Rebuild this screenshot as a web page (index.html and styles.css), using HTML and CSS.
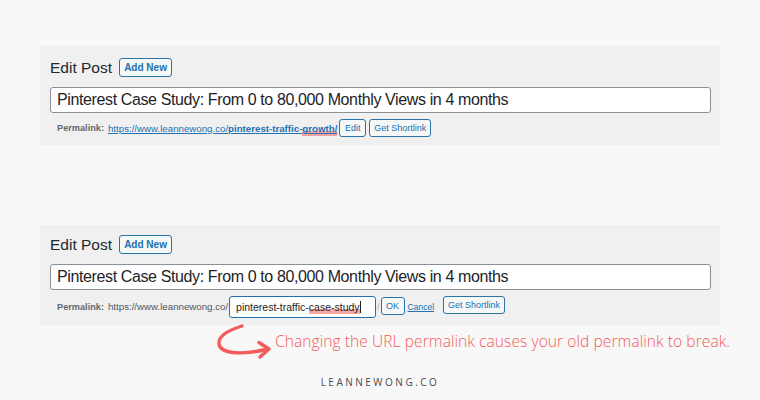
FILE: index.html
```html
<!DOCTYPE html>
<html>
<head>
<meta charset="utf-8">
<link rel="stylesheet" href="styles.css">
</head>
<body>
<div class="page">
  <section class="panel panel-a">
    <div class="head">
      <h1 class="title">Edit Post</h1>
      <span class="btn btn-add">Add New</span>
    </div>
    <div class="post-input">Pinterest Case Study: From 0 to 80,000 Monthly Views in 4 months</div>
    <div class="perma">
      <span class="label">Permalink:</span>
      <a class="link">https://www.leannewong.co/<b>pinterest-traffic-<span class="hl">growth/</span></b></a>
      <span class="btn btn-sm btn-edit">Edit</span>
      <span class="btn btn-sm btn-short">Get Shortlink</span>
    </div>
  </section>

  <section class="panel panel-b">
    <div class="head">
      <h1 class="title">Edit Post</h1>
      <span class="btn btn-add">Add New</span>
    </div>
    <div class="post-input">Pinterest Case Study: From 0 to 80,000 Monthly Views in 4 months</div>
    <div class="perma perma-b">
      <span class="label">Permalink:</span>
      <span class="base">https://www.leannewong.co/</span>
      <span class="slug-edit">pinterest-traffic-<span class="hl hl-b">case-study</span><span class="caret"></span></span>
      <span class="slash">/</span>
      <span class="btn btn-sm btn-ok">OK</span>
      <a class="cancel">Cancel</a>
      <span class="btn btn-sm btn-short">Get Shortlink</span>
    </div>
  </section>

  <div class="note">
    <svg class="arrow" width="58" height="40" viewBox="0 0 58 40">
      <path d="M27 2 C14 6 3 12 4 20 C5 29 24 32 53 25" fill="none" stroke="#f45b5b" stroke-width="3.4" stroke-linecap="round"/>
      <path d="M44 18.5 L54 25 L45 33" fill="none" stroke="#f45b5b" stroke-width="3.4" stroke-linecap="round" stroke-linejoin="round"/>
    </svg>
    <span class="note-text">Changing the URL permalink causes your old permalink to break.</span>
  </div>

  <div class="brand">LEANNEWONG.CO</div>
</div>
</body>
</html>
```
FILE: styles.css
```css
* { box-sizing: border-box; }
html, body { margin: 0; padding: 0; }
body {
  background: #f8f8f8;
  width: 760px;
  height: 400px;
  overflow: hidden;
  font-family: "Liberation Sans", Arial, sans-serif;
  color: #1d2327;
}
.page {
  display: flex;
  flex-direction: column;
  padding-top: 46px;
}
.panel {
  margin-left: 40px;
  width: 680px;
  background: #f0f0f0;
  padding: 12px 9px 0 10px;
  display: flex;
  flex-direction: column;
}
.panel-a { height: 99px; }
.panel-b { height: 100px; margin-top: 80px; padding-top: 10px; }
.head {
  display: flex;
  align-items: center;
  gap: 7px;
  height: 19px;
}
.title {
  margin: 0;
  font-size: 15.5px;
  font-weight: 400;
  color: #23282d;
  line-height: 18px;
}
.btn {
  display: inline-flex;
  align-items: center;
  justify-content: center;
  border: 1px solid #2a73a8;
  border-radius: 3px;
  background: #f6f7f7;
  color: #2271b1;
  font-weight: 600;
}
.btn-add {
  height: 19px;
  width: 53px;
  font-size: 10px;
  font-weight: 700;
}
.post-input {
  margin-top: 10px;
  height: 26px;
  background: #fff;
  border: 1px solid #8c8f94;
  border-radius: 3px;
  padding-left: 6px;
  font-size: 16px;
  letter-spacing: -0.38px;
  line-height: 24px;
  color: #1d2327;
}
.perma {
  display: flex;
  align-items: center;
  height: 18px;
  margin-top: 6px;
  padding-left: 7px;
  font-size: 9.2px;
  color: #50575e;
}
.label { font-weight: 700; color: #646970; margin-right: 4px; }
.link {
  color: #2271b1;
  text-decoration: underline;
  margin-right: 2px;
  font-size: 9.7px;
}
.link b { font-weight: 700; }
.hl {
  background: linear-gradient(to bottom, transparent 62%, rgba(240, 110, 110, 0.6) 62%);
  padding-bottom: 2px;
}
.btn-sm {
  height: 18px;
  padding: 0;
  font-size: 9px;
  font-weight: 400;
  margin-right: 3px;
}
.btn-edit { width: 27px; }
.btn-short { width: 62px; }
.perma-b { height: 22px; margin-top: 6px; align-items: flex-start; }
.perma-b .label, .perma-b .base { line-height: 22px; }
.base { color: #50575e; margin-right: 1px; font-size: 9.7px; }
.slug-edit {
  display: inline-flex;
  align-items: center;
  width: 147px;
  height: 22px;
  background: #fff;
  border: 1.5px solid #2271b1;
  border-radius: 3px;
  padding-left: 6px;
  font-size: 10.5px;
  color: #1d2327;
}
.hl-b { padding-bottom: 1px; }
.caret {
  display: inline-block;
  width: 1px;
  height: 12px;
  background: #222;
}
.slash { color: #a0a5aa; margin: 0 1px 0 1px; line-height: 22px; font-size: 9px; }
.btn-ok { height: 18px; width: 24px; margin-top: 1px; margin-right: 3px; }
.cancel {
  color: #2271b1;
  text-decoration: underline;
  font-size: 8.5px;
  line-height: 22px;
  margin-right: 9px;
}
.perma-b .btn-short { height: 18px; margin-top: 0; }
.note {
  display: flex;
  align-items: center;
  margin-left: 215px;
  height: 38px;
}
.arrow { flex: none; margin-right: 2px; }
.note-text {
  color: #f45b5b;
  font-family: "Open Sans", sans-serif;
  font-weight: 300;
  font-size: 15.6px;
  letter-spacing: 0.05px;
  margin-top: -6px;
}
.brand {
  margin-top: 12px;
  text-align: center;
  font-family: "Open Sans", sans-serif;
  font-size: 10px;
  letter-spacing: 2.5px;
  color: #4a4a4a;
}
```
